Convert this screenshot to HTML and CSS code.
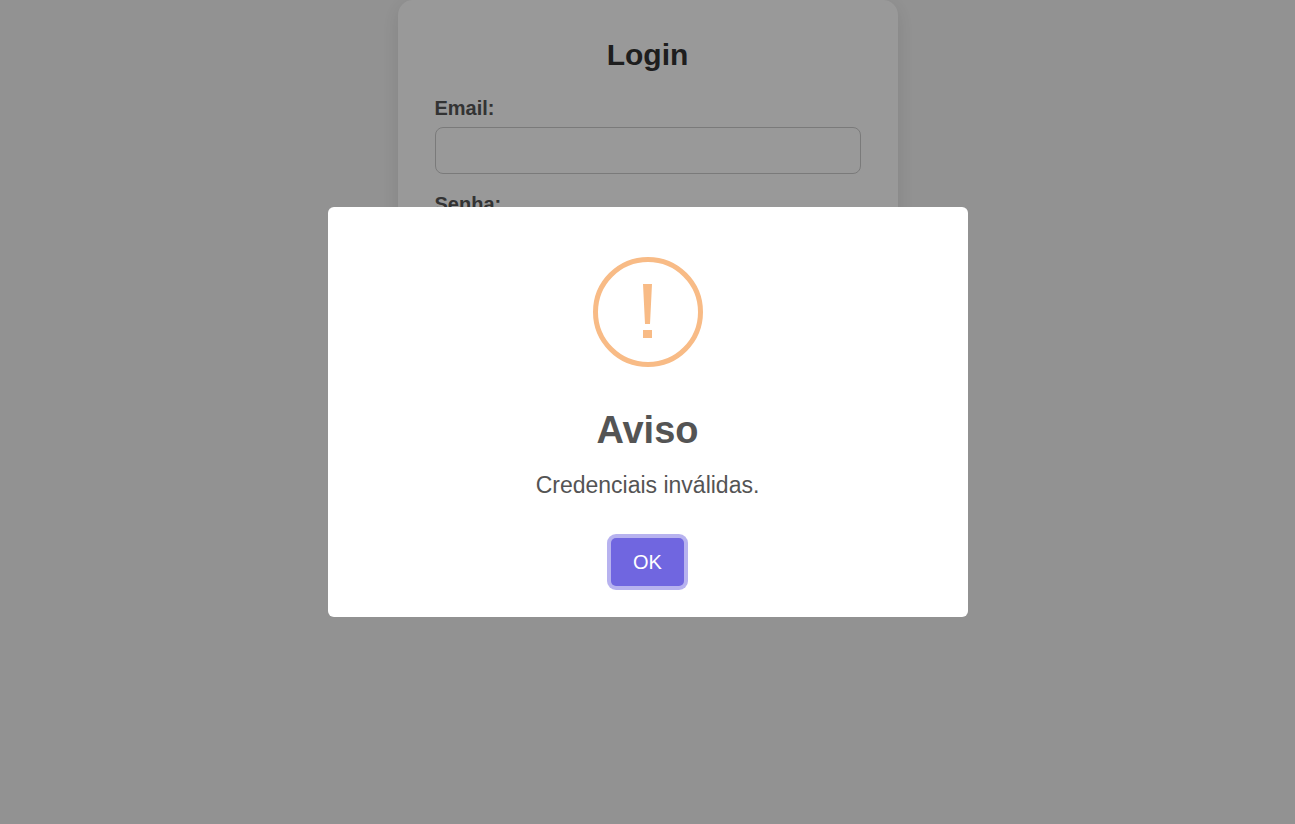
FILE: index.html
```html
<!DOCTYPE html>
<html lang="pt-BR">
<head>
<meta charset="utf-8">
<meta name="viewport" content="width=device-width, initial-scale=1">
<title>Login</title>
<link rel="stylesheet" href="styles.css">
</head>
<body>
<main class="card">
  <h1 class="card-title">Login</h1>
  <form class="form">
    <div class="field">
      <label class="label" for="email">Email:</label>
      <input class="input" id="email" type="email">
    </div>
    <div class="field">
      <label class="label" for="senha">Senha:</label>
      <input class="input" id="senha" type="password">
    </div>
  </form>
</main>
<div class="overlay">
  <div class="modal" role="dialog" aria-modal="true" aria-labelledby="modal-title" aria-describedby="modal-text">
    <svg class="modal-icon" viewBox="0 0 110 110" aria-hidden="true">
      <circle cx="55" cy="55" r="52.5" fill="none" stroke="#f8bb86" stroke-width="5"/>
      <path d="M50 27h9l-2 40h-5zM50 73h9v8h-9z" fill="#f8bb86"/>
    </svg>
    <h2 class="modal-title" id="modal-title">Aviso</h2>
    <p class="modal-text" id="modal-text">Credenciais inválidas.</p>
    <button class="confirm" type="button">OK</button>
  </div>
</div>
</body>
</html>
```

FILE: styles.css
```css
* { box-sizing: border-box; }

body {
  margin: 0;
  min-height: 100vh;
  background: #f4f4f4;
  color: #333;
  font-family: "Liberation Sans", Arial, sans-serif;
  font-size: 20px;
}

.card {
  width: 100%;
  max-width: 500px;
  margin: 0 auto;
  padding: 37px;
  background: #fff;
  border-radius: 15px;
  box-shadow: 0 5px 20px rgba(0, 0, 0, 0.1);
}

.card-title {
  margin: 0 0 25px;
  color: #333;
  font-size: 30px;
  line-height: 35px;
  text-align: center;
}

.form {
  display: flex;
  flex-direction: column;
  gap: 19px;
}

.field {
  display: flex;
  flex-direction: column;
  gap: 7px;
}

.label {
  color: #555;
  font-weight: bold;
  line-height: 23px;
}

.input {
  width: 100%;
  height: 47px;
  padding: 12px;
  border: 1px solid #ccc;
  border-radius: 8px;
  background: #fff;
  font: inherit;
}

.overlay {
  position: fixed;
  inset: 0;
  display: flex;
  align-items: center;
  justify-content: center;
  padding: 12px;
  background: rgba(0, 0, 0, 0.4);
}

.modal {
  display: flex;
  flex-direction: column;
  align-items: center;
  width: 100%;
  max-width: 640px;
  padding: 50px 20px 31px;
  background: #fff;
  border-radius: 6px;
  color: #545454;
}

.modal-icon {
  display: block;
  width: 110px;
  height: 110px;
  margin-bottom: 41px;
}

.modal-title {
  margin: 0;
  font-size: 38px;
  line-height: 44px;
}

.modal-text {
  margin: 20px 0 39px;
  font-size: 23px;
  line-height: 27px;
  text-align: center;
}

.confirm {
  height: 48px;
  padding: 0 22px;
  border: 0;
  border-radius: 5px;
  background: #7066e0;
  box-shadow: 0 0 0 4px rgba(112, 102, 224, 0.5);
  color: #fff;
  font: inherit;
}
```
